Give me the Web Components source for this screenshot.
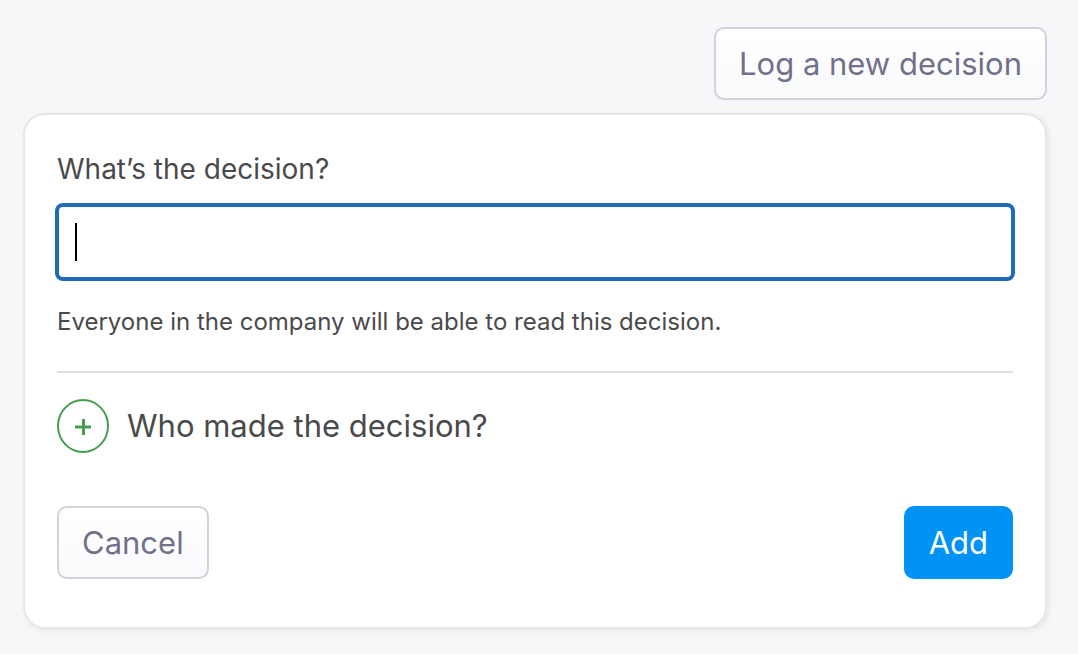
<!DOCTYPE html>
<html lang="en">
<head>
<meta charset="utf-8">
<meta name="viewport" content="width=device-width, initial-scale=1">
<title>Log a new decision</title>
<style>
body { margin: 0; background: #f5f7f9; color: #4a4a4c; font-family: Inter, "Liberation Sans", sans-serif; }
</style>
</head>
<body>
<decision-page></decision-page>
<script>
class AppButton extends HTMLElement {
  connectedCallback() {
    this.attachShadow({ mode: "open" }).innerHTML = `
      <style>
        :host { display: block; }
        button {
          box-sizing: border-box; height: 73px; padding: 0 23px;
          border: 2px solid #d1d2da; border-radius: 10px;
          background: linear-gradient(#ffffff, #f9fafc);
          color: #72708a; font: 400 31px/40px Inter, "Liberation Sans", sans-serif;
          white-space: nowrap; cursor: pointer;
        }
        :host([primary]) button { border-color: #0093f5; background: #0093f5; color: #ffffff; }
      </style>
      <button type="button"><slot></slot></button>`;
  }
}
customElements.define("app-button", AppButton);

class TextField extends HTMLElement {
  connectedCallback() {
    this.attachShadow({ mode: "open" }).innerHTML = `
      <style>
        :host { display: block; }
        label { display: block; margin-bottom: 18px; font-size: 28px; line-height: 36px; }
        .box { position: relative; }
        input {
          display: block; box-sizing: border-box; width: 100%; height: 74px; padding: 0 16px;
          border: 2px solid #1f6bb8; border-radius: 6px; outline: none;
          box-shadow: 0 0 0 2px #1f6bb8; background: #ffffff; color: inherit;
          font: 400 31px/40px Inter, "Liberation Sans", sans-serif; caret-color: transparent;
        }
        .caret { position: absolute; left: 18px; top: 18px; width: 2px; height: 38px; background: #000000; }
        p { margin: 25px 0 0; font-size: 24px; line-height: 36px; }
      </style>
      <label for="field"><slot></slot></label>
      <div class="box"><input id="field" type="text" aria-describedby="hint"><span class="caret" aria-hidden="true"></span></div>
      <p id="hint"><slot name="hint"></slot></p>`;
  }
}
customElements.define("text-field", TextField);

class AddPerson extends HTMLElement {
  connectedCallback() {
    this.attachShadow({ mode: "open" }).innerHTML = `
      <style>
        :host { display: block; }
        button {
          display: flex; align-items: center; gap: 18px; padding: 0; border: 0; background: none;
          color: inherit; font: 400 31px/54px Inter, "Liberation Sans", sans-serif; cursor: pointer;
        }
        svg { display: block; flex: none; }
      </style>
      <button type="button">
        <svg width="52" height="54" viewBox="0 0 52 54" fill="none" stroke="#459e50" aria-hidden="true">
          <ellipse cx="26" cy="27" rx="25" ry="26" stroke-width="2"/>
          <path d="M18 28H34M26.500 20V36" stroke-width="3"/>
        </svg>
        <span><slot></slot></span>
      </button>`;
  }
}
customElements.define("add-person", AddPerson);

class DecisionCard extends HTMLElement {
  connectedCallback() {
    this.attachShadow({ mode: "open" }).innerHTML = `
      <style>
        :host {
          display: block; padding: 36px 32px 48px; border-radius: 20px; background: #ffffff;
          box-shadow: 0 0 0 2px #e6e7e8, 2px 2px 6px 2px rgba(0, 0, 0, 0.07);
        }
        .people { margin-top: 31px; padding-top: 26px; border-top: 2px solid #d9e0e6; }
        .actions { display: flex; justify-content: space-between; margin-top: 53px; }
      </style>
      <slot name="field"></slot>
      <div class="people"><slot name="people"></slot></div>
      <div class="actions"><slot name="actions"></slot></div>`;
  }
}
customElements.define("decision-card", DecisionCard);

class DecisionPage extends HTMLElement {
  connectedCallback() {
    this.attachShadow({ mode: "open" }).innerHTML = `
      <style>
        :host { display: block; padding: 27px 0 26px; }
        header { display: flex; justify-content: flex-end; padding: 0 31px 15px; }
        main { padding: 0 33px 0 25px; }
      </style>
      <header><app-button>Log a new decision</app-button></header>
      <main>
        <decision-card>
          <text-field slot="field">What’s the decision?<span slot="hint">Everyone in the company will be able to read this decision.</span></text-field>
          <add-person slot="people">Who made the decision?</add-person>
          <app-button slot="actions">Cancel</app-button>
          <app-button slot="actions" primary>Add</app-button>
        </decision-card>
      </main>`;
  }
}
customElements.define("decision-page", DecisionPage);
</script>
</body>
</html>
